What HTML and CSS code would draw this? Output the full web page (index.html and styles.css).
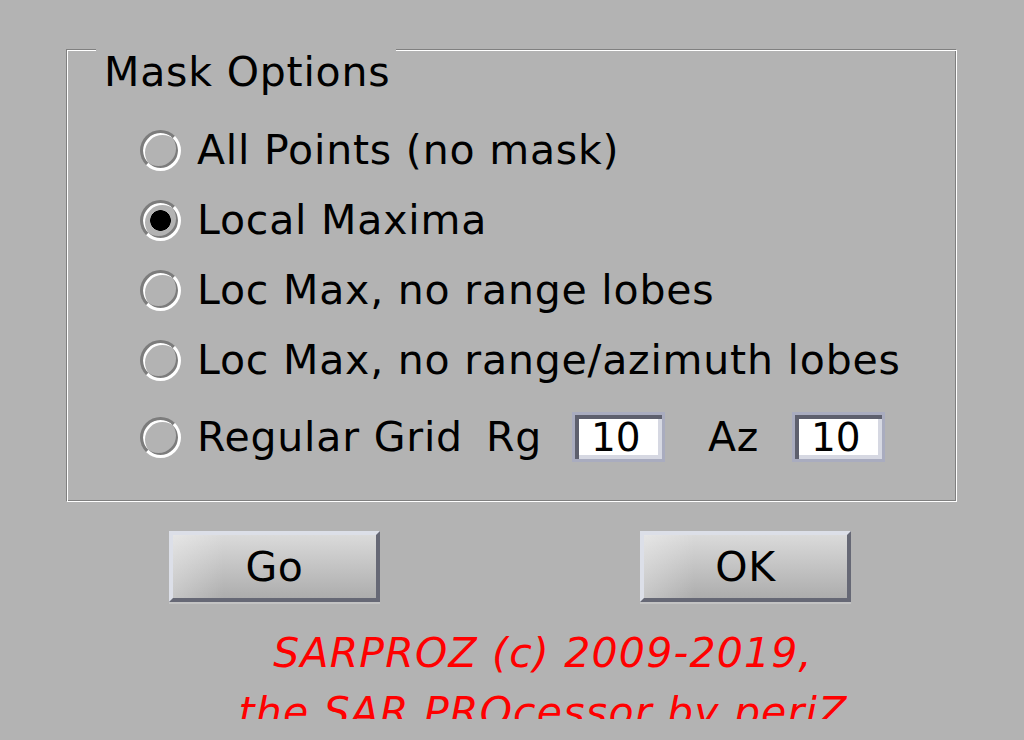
FILE: index.html
```html
<!DOCTYPE html>
<html lang="en">
  <head>
    <meta charset="UTF-8" />
    <title>Mask Options</title>
    <link rel="stylesheet" href="styles.css">
  </head>
  <body>
    <div class="dialog">
      <!-- Mask options group -->
      <div class="group">
        <div class="group-title">Mask Options</div>

        <label class="option first">
          <input type="radio" name="mask" />
          <span>All Points (no mask)</span>
        </label>
        <label class="option">
          <input type="radio" name="mask" checked />
          <span>Local Maxima</span>
        </label>
        <label class="option">
          <input type="radio" name="mask" />
          <span>Loc Max, no range lobes</span>
        </label>
        <label class="option">
          <input type="radio" name="mask" />
          <span>Loc Max, no range/azimuth lobes</span>
        </label>
        <div class="option grid">
          <input type="radio" name="mask" />
          <span class="grid-text">Regular Grid</span>
          <span class="tag">Rg</span>
          <input type="text" class="field" value="10" />
          <span class="tag az">Az</span>
          <input type="text" class="field" value="10" />
        </div>
      </div>

      <div class="actions">
        <button type="button">Go</button>
        <button type="button">OK</button>
      </div>

      <div class="credits">
        SARPROZ (c) 2009-2019,<br />
        the SAR PROcessor by periZ
      </div>
    </div>
  </body>
</html>
```

FILE: styles.css
```css
/* General */
body {
  margin: 0;
  height: 740px;
  overflow: hidden;
  background: #b3b3b3;
  font-family: "DejaVu Sans", sans-serif;
  color: #000;
}

.dialog {
  padding-top: 50px;
}

/* Etched group box */
.group {
  margin-left: 67px;
  width: 890px;
  height: 452px;
  box-sizing: border-box;
  border: 1px solid #fff;
  box-shadow: -1px -1px 0 #808080, inset -1px -1px 0 #808080;
}

.group-title {
  width: fit-content;
  margin: -3px 0 0 28px;
  padding: 2px 6px 0 8px;
  background: #b3b3b3;
  font-size: 41px;
  line-height: 44px;
  letter-spacing: 0.8px;
}

.option {
  display: flex;
  align-items: center;
  height: 70px;
  padding-left: 72px;
  font-size: 41px;
  letter-spacing: 0.8px;
}

.option.first {
  margin-top: 21px;
}

.option.grid {
  height: 84px;
}

.option input[type="radio"] {
  appearance: none;
  flex: none;
  width: 41px;
  height: 41px;
  margin: 0 16px 0 0;
  box-sizing: border-box;
  border-radius: 50%;
  border: 3px solid;
  border-color: #7c7c7c #fff #fff #7c7c7c;
  box-shadow: inset 2px 2px 0 #fff, inset -2px -2px 0 #7c7c7c;
  background: transparent;
}

.option input[type="radio"]:checked {
  background: radial-gradient(circle, #000 0 10px, transparent 10.6px);
}

.grid-text {
  width: 289px;
  flex: none;
}

.tag {
  width: 86px;
  flex: none;
}

.tag.az {
  width: 84px;
  margin-left: 43px;
}

.field {
  flex: none;
  width: 93px;
  height: 50px;
  box-sizing: border-box;
  margin: 0;
  padding: 0 0 0 16px;
  border: 3px solid #a9acbf;
  box-shadow: inset 4px 4px 0 #5e606e, inset -4px -4px 0 #d6d8e2;
  background: #fff;
  font-family: "DejaVu Sans", sans-serif;
  font-size: 39px;
  color: #000;
  outline: none;
}

/* Buttons */
.actions {
  display: flex;
  justify-content: space-between;
  width: 682px;
  margin: 29px 0 0 169px;
}

.actions button {
  width: 211px;
  height: 71px;
  box-sizing: border-box;
  border: 4px solid;
  border-color: #dcdfe8 #666875 #666875 #dcdfe8;
  box-shadow: 0 2px 0 #c3c3c3;
  background: linear-gradient(to right, rgba(255, 255, 255, 0.3), rgba(255, 255, 255, 0) 25%),
    linear-gradient(#dadada, #adadad);
  font-family: "DejaVu Sans", sans-serif;
  font-size: 41px;
  letter-spacing: 0.6px;
  color: #000;
  padding: 0;
}

/* Credits, clipped by its own box */
.credits {
  height: 95px;
  overflow: hidden;
  margin-top: 22px;
  padding-left: 62px;
  text-align: center;
  color: #f00;
  font-style: italic;
  font-size: 41px;
  line-height: 59px;
  letter-spacing: 1.2px;
}
```
